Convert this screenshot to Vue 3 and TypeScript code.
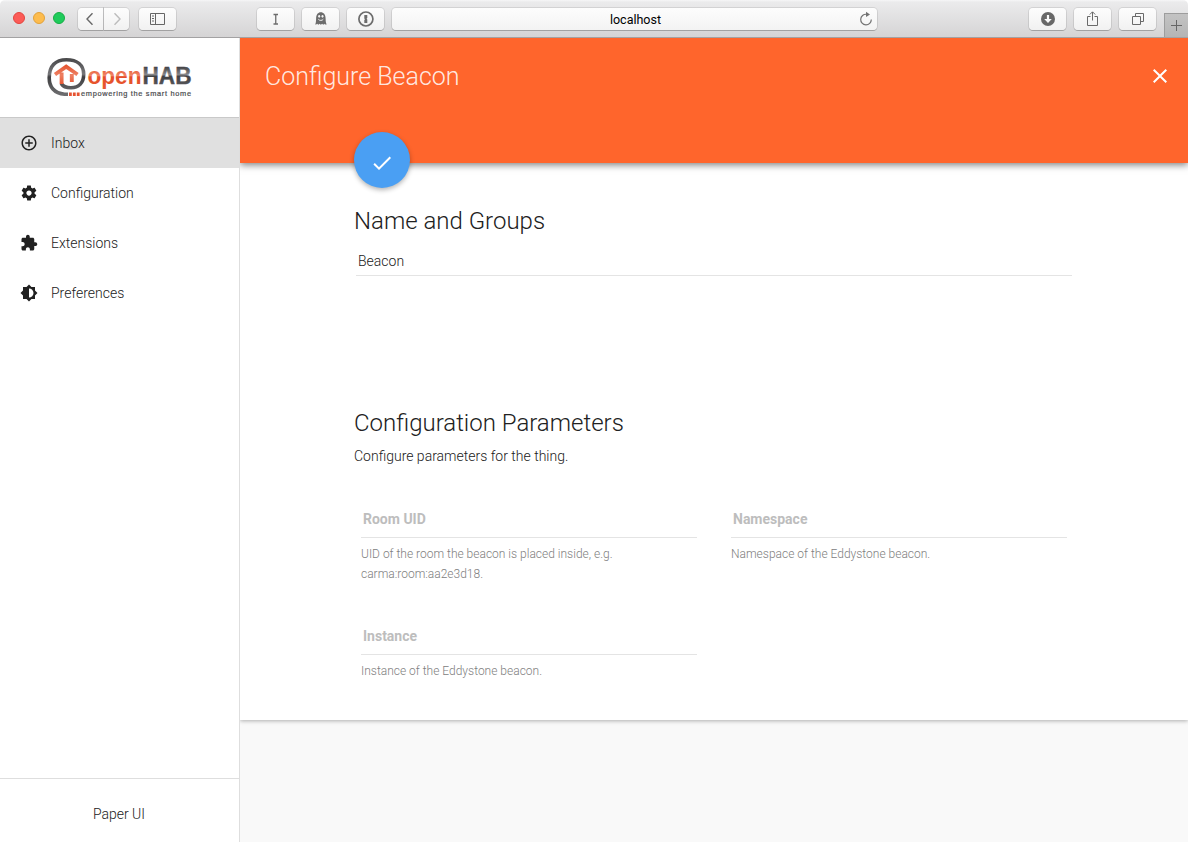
<script setup lang="ts">
interface MenuItem {
  label: string
  icon: string
  active: boolean
}

interface Parameter {
  label: string
  description: string
}

const menu: MenuItem[] = [
  {
    label: 'Inbox',
    icon: 'M13 7h-2v4H7v2h4v4h2v-4h4v-2h-4V7zm-1-5C6.48 2 2 6.48 2 12s4.48 10 10 10 10-4.48 10-10S17.52 2 12 2zm0 18c-4.41 0-8-3.59-8-8s3.59-8 8-8 8 3.59 8 8-3.59 8-8 8z',
    active: true,
  },
  {
    label: 'Configuration',
    icon: 'M19.43 12.98c.04-.32.07-.64.07-.98s-.03-.66-.07-.98l2.11-1.65c.19-.15.24-.42.12-.64l-2-3.46c-.12-.22-.39-.3-.61-.22l-2.49 1c-.52-.4-1.08-.73-1.69-.98l-.38-2.65C14.46 2.18 14.25 2 14 2h-4c-.25 0-.46.18-.49.42l-.38 2.65c-.61.25-1.17.59-1.69.98l-2.49-1c-.23-.09-.49 0-.61.22l-2 3.46c-.13.22-.07.49.12.64l2.11 1.65c-.04.32-.07.65-.07.98s.03.66.07.98l-2.11 1.65c-.19.15-.24.42-.12.64l2 3.46c.12.22.39.3.61.22l2.49-1c.52.4 1.08.73 1.69.98l.38 2.65c.03.24.24.42.49.42h4c.25 0 .46-.18.49-.42l.38-2.65c.61-.25 1.17-.59 1.69-.98l2.49 1c.23.09.49 0 .61-.22l2-3.46c.12-.22.07-.49-.12-.64l-2.11-1.65zM12 15.5c-1.93 0-3.5-1.57-3.5-3.5s1.57-3.5 3.5-3.5 3.5 1.57 3.5 3.5-1.57 3.5-3.5 3.5z',
    active: false,
  },
  {
    label: 'Extensions',
    icon: 'M20.5 11H19V7c0-1.1-.9-2-2-2h-4V3.5C13 2.12 11.88 1 10.5 1S8 2.12 8 3.5V5H4c-1.1 0-1.99.9-1.99 2v3.8H3.5c1.49 0 2.7 1.21 2.7 2.7s-1.21 2.7-2.7 2.7H2V20c0 1.1.9 2 2 2h3.8v-1.5c0-1.49 1.21-2.7 2.7-2.7 1.49 0 2.7 1.21 2.7 2.7V22H17c1.1 0 2-.9 2-2v-4h1.5c1.38 0 2.5-1.12 2.5-2.5S21.88 11 20.5 11z',
    active: false,
  },
  {
    label: 'Preferences',
    icon: 'M20 15.31L23.31 12 20 8.69V4h-4.69L12 .69 8.69 4H4v4.69L.69 12 4 15.31V20h4.69L12 23.31 15.31 20H20v-4.69zM12 18V6c3.31 0 6 2.69 6 6s-2.69 6-6 6z',
    active: false,
  },
]

const parameters: Parameter[] = [
  { label: 'Room UID', description: 'UID of the room the beacon is placed inside, e.g. carma:room:aa2e3d18.' },
  { label: 'Namespace', description: 'Namespace of the Eddystone beacon.' },
  { label: 'Instance', description: 'Instance of the Eddystone beacon.' },
]
</script>

<template>
  <div class="window">
    <header class="toolbar">
      <div class="lights">
        <i class="light close"></i>
        <i class="light minimise"></i>
        <i class="light zoom"></i>
      </div>
      <div class="nav">
        <button class="btn half">
          <svg width="26" height="22" viewBox="0 0 26 22"><path d="M14.5 5.2L9 11l5.5 5.8" fill="none" stroke="#686868" stroke-width="1.4" /></svg>
        </button>
        <button class="btn half">
          <svg width="26" height="22" viewBox="0 0 26 22"><path d="M10.500 5.200L16 11l-5.500 5.800" fill="none" stroke="#bcbcbc" stroke-width="1.400" /></svg>
        </button>
      </div>
      <button class="btn side">
        <svg width="37" height="22" viewBox="0 0 37 22" fill="none" stroke="#666">
          <path d="M11.500 5.500h14v11h-14zM16.500 5.500v11M13 8h2M13 10.500h2M13 13h2" />
        </svg>
      </button>
      <div class="plugins">
        <button class="btn">
          <svg width="37" height="22" viewBox="0 0 37 22"><path d="M16.500 6.500h4.500M16.500 16h4.500M18.750 6.500V16" fill="none" stroke="#6c6c6c" stroke-width="1.300" /></svg>
        </button>
        <button class="btn">
          <svg width="37" height="22" viewBox="0 0 37 22">
            <path d="M13.200 16.500c.800-1.800.800-3 .900-6C14.200 6.500 16 4.300 18.800 4.300s4.700 2.200 4.800 6.200c.100 3 .200 4.200 1.100 6-.900.300-1.700 0-2.100-.800-.600 1.200-2 1.200-2.500.100-.700 1.100-1.900 1.100-2.500 0-.600 1.100-1.900 1.100-2.400 0-.400.700-1.200 1-2 .700z" fill="#6c6c6c" />
            <ellipse cx="17.200" cy="8.300" rx="1" ry="1.400" fill="#f5f5f5" /><ellipse cx="20.500" cy="8.300" rx="1" ry="1.400" fill="#f5f5f5" />
            <path d="M16.300 11.200c1.200 1.600 3.900 1.600 5 0" fill="none" stroke="#f5f5f5" />
          </svg>
        </button>
        <button class="btn">
          <svg width="37" height="22" viewBox="0 0 37 22">
            <circle cx="18.900" cy="11" r="7" fill="none" stroke="#6c6c6c" stroke-width="1.700" />
            <path d="M17.300 7h3v3.100l-.700.700.700.700V15h-3v-3.100l.700-.700-.700-.700z" fill="#6c6c6c" />
          </svg>
        </button>
      </div>
      <div class="address">
        <span class="host">localhost</span>
        <svg class="reload" width="14" height="16" viewBox="0 0 14 16">
          <path d="M7.500 3.300A5.300 5.300 0 1 0 12.300 8.500" fill="none" stroke="#737373" stroke-width="1.200" /><path d="M7 .7v5.200l4-2.500z" fill="#737373" />
        </svg>
      </div>
      <div class="actions">
        <button class="btn">
          <svg width="37" height="22" viewBox="0 0 37 22"><circle cx="19" cy="11" r="7" fill="#686868" /><path d="M17.900 7h2.200v4h2.700L19 15l-3.800-4h2.700z" fill="#fafafa" /></svg>
        </button>
        <button class="btn">
          <svg width="37" height="22" viewBox="0 0 37 22" fill="none" stroke="#6a6a6a"><path d="M16.500 8.500h-3v9h10v-9h-3M18.500 12.500V4M15.800 6.500l2.700-2.700 2.700 2.700" /></svg>
        </button>
        <button class="btn">
          <svg width="37" height="22" viewBox="0 0 37 22" fill="none" stroke="#6a6a6a"><path d="M13.500 8.500h8v8h-8zM16.500 8.500v-3h8v8h-3" /></svg>
        </button>
      </div>
      <div class="newtab">
        <svg width="24" height="24" viewBox="0 0 24 24"><path d="M6 11.500h11M11.500 6v11" stroke="#666" fill="none" /></svg>
      </div>
    </header>

    <div class="body">
      <aside class="sidebar">
        <div class="brand">
          <svg width="148" height="44" viewBox="46 56 148 44">
            <defs>
              <linearGradient id="ring" x1="0" y1="0" x2="0" y2="1">
                <stop offset="0" stop-color="#4b4b4d" /><stop offset=".42" stop-color="#77777a" /><stop offset=".5" stop-color="#3e3e40" /><stop offset="1" stop-color="#6c6c6e" />
              </linearGradient>
              <linearGradient id="house" gradientUnits="userSpaceOnUse" x1="0" y1="65" x2="0" y2="85">
                <stop offset="0" stop-color="#e5542f" /><stop offset=".5" stop-color="#ee8063" /><stop offset="1" stop-color="#e5542f" />
              </linearGradient>
              <linearGradient id="orange" gradientUnits="userSpaceOnUse" x1="0" y1="70" x2="0" y2="89">
                <stop offset="0" stop-color="#e8603c" /><stop offset=".3" stop-color="#f0896a" /><stop offset=".36" stop-color="#e54f2a" /><stop offset="1" stop-color="#e8592f" />
              </linearGradient>
              <linearGradient id="dark" gradientUnits="userSpaceOnUse" x1="0" y1="67" x2="0" y2="84">
                <stop offset="0" stop-color="#434346" /><stop offset=".48" stop-color="#8b8b8e" /><stop offset=".52" stop-color="#3f3f42" /><stop offset="1" stop-color="#535356" />
              </linearGradient>
            </defs>
            <path d="M68 94.200H64.500C54 93.500 49.200 86.500 49.200 78c0-12 6.300-18.300 17.200-18.300S83.700 65 83.700 74.300c0 8.700-5.200 13.500-12.700 13.500-4.500 0-8-1.300-9.800-4.300" fill="none" stroke="url(#ring)" stroke-width="3.600" />
            <path d="M55 74.500L66.200 66.700 77.500 74.500M61.600 72.500V84M71.800 82v-8" fill="none" stroke="url(#house)" stroke-width="3.900" />
            <path d="M69 92.500h2.800v3.500H69zM72.900 92.500h2.800v3.500h-2.800zM76.800 92.500h2.800v3.500h-2.800z" fill="#e65331" />
            <text x="87.500" y="83.500" class="word open" textLength="54" lengthAdjust="spacingAndGlyphs">open</text>
            <text x="142.500" y="83.500" class="word hab" textLength="49" lengthAdjust="spacingAndGlyphs">HAB</text>
            <text x="81" y="95.700" class="tag" textLength="110" lengthAdjust="spacing">empowering the smart home</text>
          </svg>
        </div>
        <nav class="menu">
          <a v-for="item in menu" :key="item.label" class="item" :class="{ active: item.active }">
            <svg width="18" height="18" viewBox="0 0 24 24"><path :d="item.icon" fill="#212121" /></svg>
            <span>{{ item.label }}</span>
          </a>
        </nav>
        <footer class="foot">Paper UI</footer>
      </aside>

      <main class="main">
        <section class="sheet">
          <div class="banner">
            <h1>Configure Beacon</h1>
            <svg class="dismiss" width="24" height="24" viewBox="0 0 24 24"><path d="M19 6.410L17.590 5 12 10.590 6.410 5 5 6.410 10.590 12 5 17.590 6.410 19 12 13.410 17.590 19 19 17.590 13.410 12z" fill="#fff" /></svg>
            <button class="fab">
              <svg width="24" height="24" viewBox="0 0 24 24"><path d="M9 16.170L4.830 12l-1.420 1.410L9 19 21 7l-1.410-1.410z" fill="#fff" /></svg>
            </button>
          </div>
          <div class="content">
            <h2 class="name">Name and Groups</h2>
            <div class="field">Beacon</div>
            <h2 class="config">Configuration Parameters</h2>
            <p class="intro">Configure parameters for the thing.</p>
            <div class="params">
              <div v-for="p in parameters" :key="p.label" class="param">
                <div class="label">{{ p.label }}</div>
                <p class="hint">{{ p.description }}</p>
              </div>
            </div>
          </div>
        </section>
      </main>
    </div>
  </div>
</template>

<style>
html,
body {
  margin: 0;
  overflow: hidden;
  background: #fff;
}
</style>

<style scoped>
* {
  box-sizing: border-box;
}
.window {
  width: 1188px;
  height: 842px;
  display: flex;
  flex-direction: column;
  overflow: hidden;
  font-family: Roboto, "Liberation Sans", sans-serif;
  font-weight: 300;
  font-size: 14px;
  color: #212121;
}
svg {
  display: block;
  flex: none;
}
h1,
h2,
p {
  margin: 0;
  font-weight: 300;
}
button {
  padding: 0;
  border: 0;
}
.toolbar {
  flex: none;
  height: 38px;
  display: flex;
  align-items: flex-start;
  padding: 8px 0 0 13px;
  border-bottom: 1px solid #a3a2a3;
  border-radius: 5px 5px 0 0;
  background: linear-gradient(#f6f6f7 0, #ebebec 2px, #d5d4d5 37px);
}
.lights {
  display: flex;
  gap: 8px;
  padding-top: 4px;
  width: 65px;
}
.light {
  width: 12px;
  height: 12px;
  border-radius: 50%;
}
.close {
  background: #fc5b57;
  border: 1px solid #e2463f;
}
.minimise {
  background: #fdbc4e;
  border: 1px solid #e1a23b;
}
.zoom {
  background: #1fcb5b;
  border: 1px solid #16ad44;
}
.nav {
  display: flex;
  gap: 1px;
  margin-right: 10px;
}
.btn {
  width: 37px;
  height: 22px;
  border-radius: 4px;
  background: linear-gradient(#fdfdfd, #f1f1f1);
  box-shadow: 0 0 0 1px rgba(0, 0, 0, 0.09), 0 1px 0 rgba(0, 0, 0, 0.18);
}
.half {
  width: 25px;
  overflow: hidden;
}
.half:first-child {
  border-radius: 4px 0 0 4px;
}
.half:last-child {
  border-radius: 0 4px 4px 0;
}
.plugins {
  display: flex;
  gap: 8px;
  margin: 0 8px 0 81px;
}
.address {
  width: 485px;
  height: 22px;
  display: flex;
  align-items: center;
  border-radius: 4px;
  background: linear-gradient(#fdfdfd, #f3f3f3);
  box-shadow: 0 0 0 1px rgba(0, 0, 0, 0.09), 0 1px 0 rgba(0, 0, 0, 0.18);
}
.host {
  flex: 1;
  padding-left: 20px;
  text-align: center;
  font: 400 12.500px/22px Roboto, sans-serif;
  letter-spacing: 0;
  padding-top: 1px;
  color: #000;
}
.reload {
  margin-right: 4px;
}
.actions {
  display: flex;
  gap: 8px;
  margin: 0 8px 0 152px;
}
.newtab {
  width: 24px;
  height: 24px;
  margin-top: 5px;
  border-left: 1px solid #9d9d9d;
  border-top: 1px solid #9d9d9d;
  background: linear-gradient(#c3c3c3, #b5b5b5);
}
.body {
  flex: 1;
  min-height: 0;
  display: flex;
}
.sidebar {
  width: 240px;
  flex: none;
  display: flex;
  flex-direction: column;
  border-right: 1px solid #dedede;
  background: #fff;
}
.brand {
  height: 80px;
  padding: 18px 0 0 46px;
  border-bottom: 1px solid #c9c9c9;
}
.word {
  font: 700 23px "Liberation Sans", Arial, sans-serif;
}
.open {
  fill: url(#orange);
}
.hab {
  fill: url(#dark);
  stroke: url(#dark);
  stroke-width: 0.4px;
}
.tag {
  font: 400 7.400px "Liberation Sans", Arial, sans-serif;
  fill: #4b4b4e;
  stroke: #4b4b4e;
  stroke-width: 0.2px;
}
.menu {
  flex: 1;
}
.item {
  height: 50px;
  display: flex;
  align-items: center;
  gap: 13px;
  padding-left: 20px;
}
.item span {
  line-height: 20px;
  padding-bottom: 1px;
}
.active {
  background: #e0e0e0;
}
.foot {
  height: 64px;
  padding: 25px 1px 0 0;
  border-top: 1px solid #dedede;
  line-height: 20px;
  text-align: center;
}
.main {
  flex: 1;
  background: #f9f9f9;
}
.sheet {
  height: 682px;
  background: #fff;
  box-shadow: 0 1px 4px rgba(0, 0, 0, 0.3);
  clip-path: inset(0 0 -10px 0);
}
.banner {
  position: relative;
  height: 125px;
  display: flex;
  justify-content: space-between;
  padding: 22px 16px 0 25px;
  background: #ff652c;
  box-shadow: 0 2px 7px rgba(0, 0, 0, 0.5);
}
.banner h1 {
  font-size: 25px;
  line-height: 33px;
  color: rgba(255, 255, 255, 0.87);
}
.dismiss {
  margin-top: 4px;
}
.fab {
  position: absolute;
  left: 114px;
  top: 94px;
  width: 56px;
  height: 56px;
  display: grid;
  place-items: center;
  padding: 5px 1px 0 0;
  border-radius: 50%;
  background: #4a9ff3;
  box-shadow: 0 2px 5px rgba(0, 0, 0, 0.3);
}
.content {
  padding: 42px 116px 0 114px;
}
.content h2 {
  font-size: 24px;
  line-height: 32px;
}
.field {
  height: 34px;
  margin: 5px 0 0 2px;
  padding: 9px 0 0 2px;
  border-bottom: 1px solid #e4e4e4;
  line-height: 20px;
}
.content .config {
  margin-top: 131px;
}
.intro {
  margin-top: 7px;
  line-height: 20px;
}
.params {
  display: grid;
  grid-template-columns: 336px 336px;
  column-gap: 34px;
  grid-auto-rows: 117px;
  margin: 43px 0 0 7px;
}
.label {
  height: 29px;
  padding-left: 2px;
  border-bottom: 1px solid #e4e4e4;
  font-weight: 700;
  line-height: 20px;
  color: #bdbdbd;
}
.hint {
  width: 290px;
  padding-top: 6px;
  font-size: 12px;
  line-height: 20px;
  color: #808080;
}
</style>
